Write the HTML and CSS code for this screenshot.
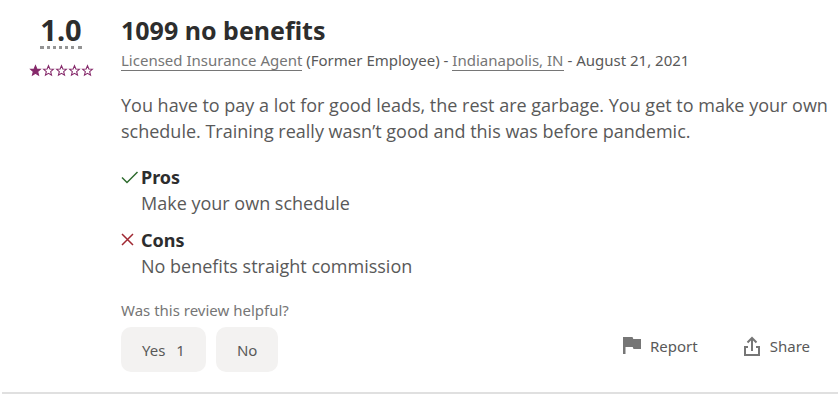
FILE: index.html
```html
<!doctype html>
<html lang="en">
<head>
<meta charset="utf-8">
<meta name="viewport" content="width=device-width, initial-scale=1">
<title>1099 no benefits</title>
<link rel="stylesheet" href="styles.css">
</head>
<body>
<svg class="defs" aria-hidden="true">
<symbol id="star" viewBox="0 0 24 24"><path d="M12 3l2.500 6.300 6.500.5-5 4.300 1.600 6.400L12 17.200l-5.600 3.300L8 14.100 3 9.800l6.500-.5z"/></symbol>
</svg>
<article class="review">
<div class="rating">
<button class="score" type="button">1.0</button>
<div class="stars" role="img" aria-label="1 out of 5 stars">
<svg class="star full"><use href="#star"/></svg>
<svg class="star"><use href="#star"/></svg>
<svg class="star"><use href="#star"/></svg>
<svg class="star"><use href="#star"/></svg>
<svg class="star"><use href="#star"/></svg>
</div>
</div>

<div class="content">
<h2 class="title">1099 no benefits</h2>
<p class="byline"><a href="#">Licensed Insurance Agent</a> (Former Employee) - <a href="#">Indianapolis, IN</a> - August 21, 2021</p>
<p class="text">You have to pay a lot for good leads, the rest are garbage. You get to make your own schedule. Training really wasn’t good and this was before pandemic.</p>

<section class="point">
<svg class="mark pro" viewBox="0 0 18 18" aria-hidden="true"><path d="M1 9.500l5 5L16.500 4"/></svg>
<div>
<h3>Pros</h3>
<p class="detail">Make your own schedule</p>
</div>
</section>
<section class="point">
<svg class="mark con" viewBox="0 0 18 18" aria-hidden="true"><path d="M1 3l11 11M12 3L1 14"/></svg>
<div>
<h3>Cons</h3>
<p class="detail">No benefits straight commission</p>
</div>
</section>

<p class="helpful">Was this review helpful?</p>
<div class="actions">
<button class="vote" type="button">Yes <span class="count">1</span></button>
<button class="vote" type="button">No</button>
<button class="tool report" type="button">
<svg viewBox="0 0 20 20" aria-hidden="true"><path fill="currentColor" d="M1 1h9.500l.8 2H19v10h-7.500l-.8-2H3.500v7H1z"/></svg>
Report
</button>
<button class="tool" type="button">
<svg viewBox="0 0 20 20" aria-hidden="true"><path fill="none" stroke="currentColor" stroke-width="2" d="M6 11H3v8h14v-8h-3"/><path fill="none" stroke="currentColor" stroke-width="2" d="M10 15V2M5.500 6.500L10 2l4.500 4.500"/></svg>
Share
</button>
</div>
</div>
</article>
</body>
</html>
```

FILE: styles.css
```css
* { box-sizing: border-box; }
body { margin: 0; background: #fff; color: #595959; font-family: "Noto Sans", "Liberation Sans", sans-serif; font-size: 18px; line-height: 26px; }
h2, h3, p { margin: 0; }
button { border: 0; padding: 0; background: none; color: inherit; font: inherit; cursor: pointer; }
.defs { position: absolute; width: 0; height: 0; }

.review { display: flex; margin-left: 2px; padding: 13px 4px 20px 24px; border-bottom: 2px solid #e0e0e0; }
.rating { flex: none; width: 70px; margin-right: 25px; display: flex; flex-direction: column; align-items: center; }
.score { margin-top: 1px; color: #2d2d2d; font-size: 29px; font-weight: 700; line-height: 32px; border-bottom: 3px dotted #949494; }
.stars { display: flex; margin-top: 15px; }
.star { width: 13px; height: 13px; fill: none; stroke: #85296a; stroke-width: 2; }
.star.full { fill: #85296a; }

.content { flex: 1; min-width: 0; }
.title { color: #2d2d2d; font-size: 25px; font-weight: 700; line-height: 34px; }
.byline { margin-top: 1px; font-size: 15px; line-height: 24px; }
.byline a { color: #767676; text-decoration: none; border-bottom: 1px solid #767676; }
.text, .detail { font-family: "Open Sans", "Noto Sans", sans-serif; }
.text { margin-top: 20px; }

.point { display: flex; margin-top: 20px; }
.point + .point { margin-top: 11px; }
.point h3 { color: #2d2d2d; font-size: 18px; font-weight: 700; }
.mark { flex: none; width: 18px; height: 18px; margin: 4px 2px 0 0; fill: none; stroke-width: 1.5; }
.pro { stroke: #2e6b2e; }
.con { stroke: #a02832; }

.helpful { margin-top: 20px; color: #767676; font-size: 15px; line-height: 22px; }
.actions { display: flex; align-items: center; margin-top: 6px; font-size: 15px; line-height: 24px; }
.vote { height: 45px; padding: 0 21px; margin-right: 10px; background: #f3f2f1; border-radius: 10px; }
.count { margin-left: 7px; }
.tool { display: flex; align-items: center; gap: 8px; margin-right: 24px; padding-bottom: 8px; }
.tool svg { width: 20px; height: 20px; color: #767676; }
.report { margin-left: auto; margin-right: 44px; }
```
